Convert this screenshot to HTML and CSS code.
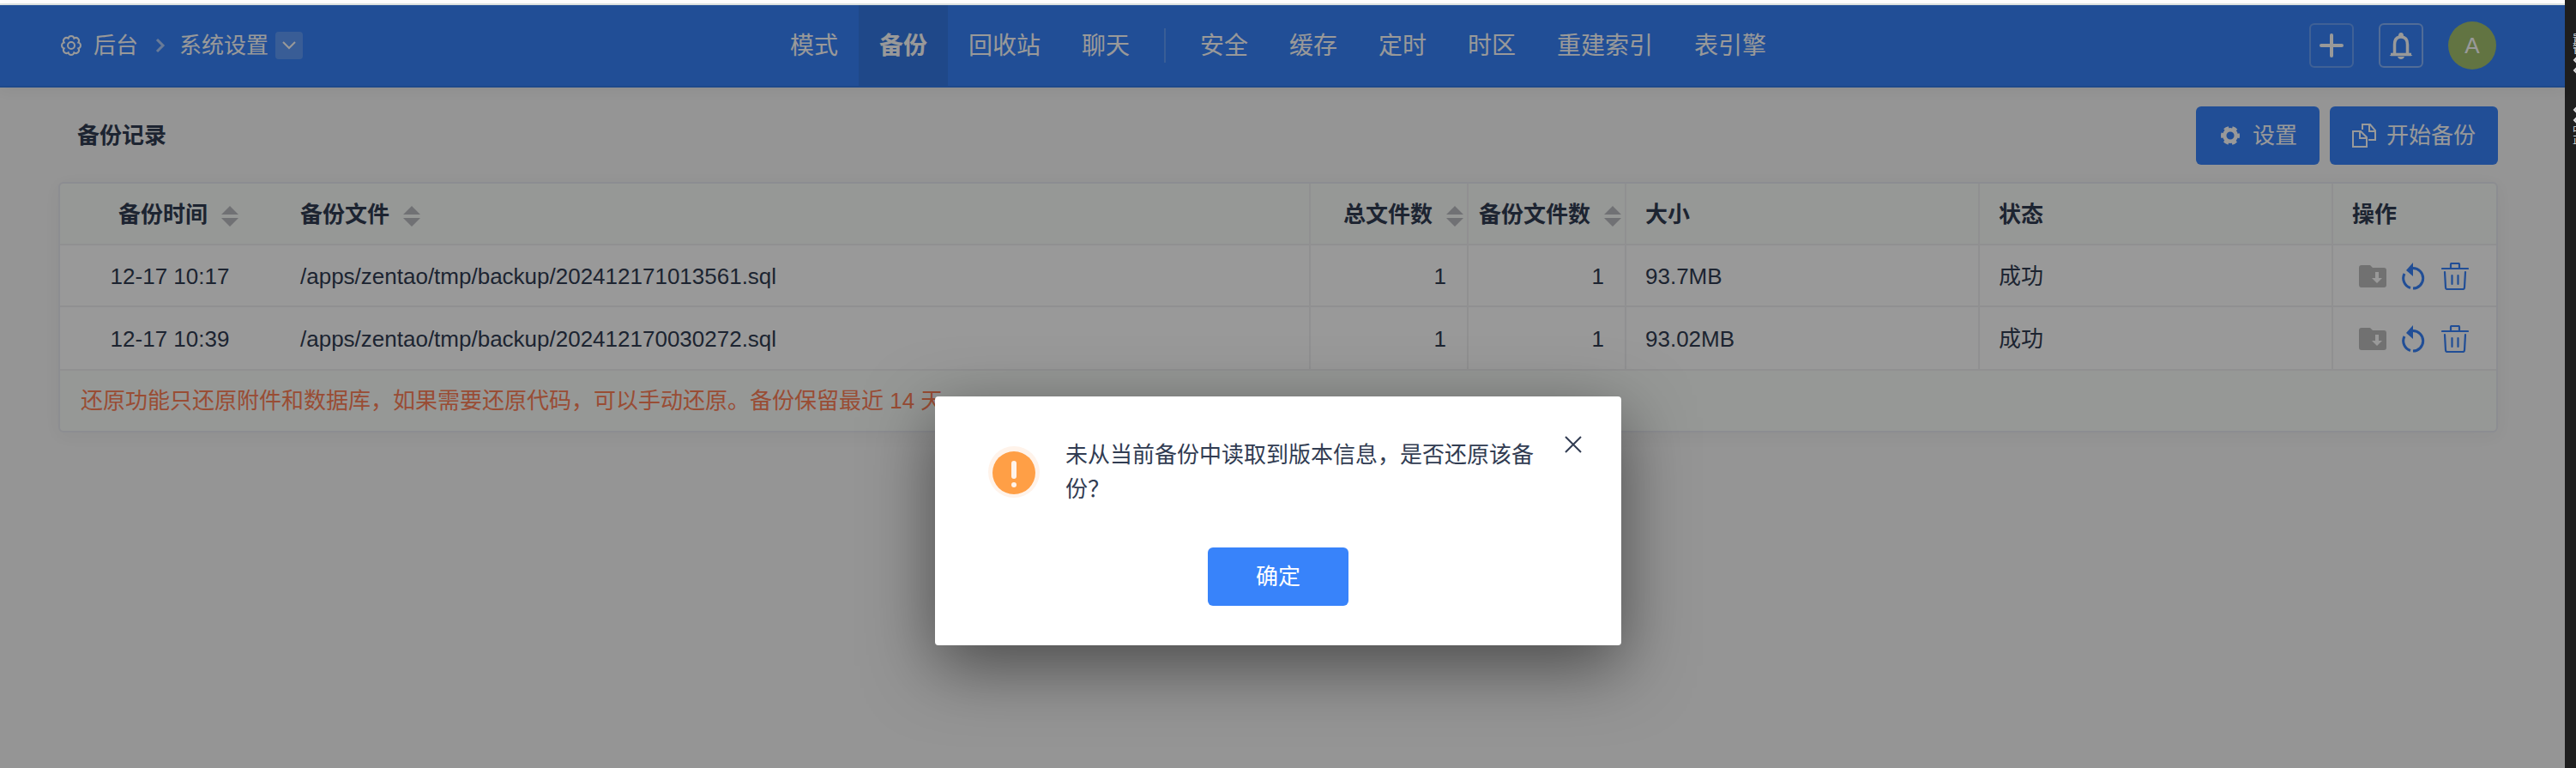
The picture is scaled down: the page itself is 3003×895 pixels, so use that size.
FILE: index.html
```html
<!DOCTYPE html>
<html lang="zh-CN">
  <head>
    <meta charset="UTF-8" />
    <meta name="viewport" content="width=device-width, initial-scale=1.0" />
    <title>备份</title>
    <link rel="stylesheet" href="styles.css">
  </head>
  <body>
    <!-- shared icons -->
    <svg class="sprite" aria-hidden="true">
      <symbol id="icon-sort" viewBox="0 0 20 24">
        <path d="M10 0 20 10H0zM0 14h20L10 24z" fill="currentColor" />
      </symbol>
      <symbol id="icon-folder" viewBox="0 0 32 32">
        <path fill="currentColor" fill-rule="evenodd" d="M3 3h10l3 3h13a3 3 0 0 1 3 3v17a3 3 0 0 1-3 3H3a3 3 0 0 1-3-3V6a3 3 0 0 1 3-3zM19 11v7h-4l6 6 6-6h-4v-7z" />
      </symbol>
      <symbol id="icon-restore" viewBox="0 0 32 32">
        <path fill="currentColor" d="M15 0v16L7 9z" />
        <path fill="none" stroke="currentColor" stroke-width="3" d="M15 6.600a11.700 11.700 0 1 1 0 23.400M12 29.500A11.700 11.700 0 0 1 5 13" />
      </symbol>
      <symbol id="icon-trash" viewBox="0 0 32 32">
        <path fill="none" stroke="currentColor" stroke-width="2.200" stroke-linecap="round" stroke-linejoin="round" d="M1 7h30M11 6V2q0-1 1-1h8q1 0 1 1v4M4 11l1 18q0 2 2 2h18q2 0 2-2l1-18M12.500 15v10M19.500 15v10" />
      </symbol>
      <symbol id="icon-mark" viewBox="0 0 12 12">
        <path fill="none" stroke="currentColor" stroke-width="2" d="M7 1 2 6l5 5 5-5z" />
      </symbol>
    </svg>

    <div class="window">
      <div class="topline"></div>
      <div class="page">
        <header class="header">
          <div class="breadcrumb">
            <a href="#" class="crumb">
              <svg class="icon-gear" viewBox="0 0 26 26" aria-hidden="true">
                <g fill="none" stroke="currentColor" stroke-width="2">
                  <path d="M9.600 4.700A3.500 3.500 0 0 1 16.400 4.700A3.500 3.500 0 0 1 21.300 9.600A3.500 3.500 0 0 1 21.300 16.400A3.500 3.500 0 0 1 16.400 21.300A3.500 3.500 0 0 1 9.600 21.300A3.500 3.500 0 0 1 4.700 16.400A3.500 3.500 0 0 1 4.700 9.600A3.500 3.500 0 0 1 9.600 4.700z" />
                  <circle cx="13" cy="13" r="4" />
                </g>
              </svg>
              后台
            </a>
            <svg class="icon-arrow" viewBox="0 0 12 18" aria-hidden="true">
              <path d="M2 2l7 7-7 7" fill="none" stroke="currentColor" stroke-width="3" />
            </svg>
            <a href="#" class="crumb">系统设置</a>
            <button type="button" class="crumb-toggle" aria-label="展开菜单">
              <svg viewBox="0 0 16 10" width="16" height="10">
                <path d="M1 1l7 7 7-7" fill="none" stroke="currentColor" stroke-width="2" />
              </svg>
            </button>
          </div>

          <nav class="nav">
            <a href="#">模式</a>
            <a href="#" class="active">备份</a>
            <a href="#">回收站</a>
            <a href="#">聊天</a>
            <span class="divider"></span>
            <a href="#">安全</a>
            <a href="#">缓存</a>
            <a href="#">定时</a>
            <a href="#">时区</a>
            <a href="#">重建索引</a>
            <a href="#">表引擎</a>
          </nav>

          <div class="toolbar">
            <button type="button" class="tool-btn faint" aria-label="新建">
              <svg viewBox="0 0 32 32" width="32" height="32">
                <path d="M16 4v24M4 16h24" stroke="currentColor" stroke-width="4" stroke-linecap="round" />
              </svg>
            </button>
            <button type="button" class="tool-btn" aria-label="通知">
              <svg viewBox="0 0 32 32" width="32" height="32">
                <path d="M4 26.500h24M8.500 26V15q0-9 7.500-9t7.500 9v11" fill="none" stroke="currentColor" stroke-width="3.500" />
                <path d="M13 5a3 4 0 0 1 6 0zM12 29h8q-1 3-4 3t-4-3z" fill="currentColor" />
                <path d="M9 23 2.500 28H9zM23 23l6.500 5H23z" fill="currentColor" />
              </svg>
            </button>
            <button type="button" class="avatar">A</button>
          </div>
        </header>

        <main class="main">
          <div class="main-header">
            <h1>备份记录</h1>
            <div class="actions">
              <button type="button" class="btn">
                <svg viewBox="0 0 28 28" width="28" height="28" aria-hidden="true">
                  <g fill="none" stroke="currentColor">
                    <circle cx="14" cy="14" r="6.800" stroke-width="4.500" />
                    <circle cx="14" cy="14" r="9" stroke-width="4" stroke-dasharray="5.400 4.025" stroke-dashoffset="2.700" />
                  </g>
                </svg>
                设置
              </button>
              <button type="button" class="btn">
                <svg viewBox="0 0 28 28" width="28" height="28" aria-hidden="true">
                  <g fill="none" stroke="currentColor" stroke-width="2">
                    <path d="M1 9h9l7 7v11H1zM9 9v8h8" />
                    <path d="M12 7V1h9l6 7v11h-8M20 1v8h7" />
                  </g>
                </svg>
                开始备份
              </button>
            </div>
          </div>

          <div class="panel">
            <table class="table">
              <colgroup>
                <col class="col-time" />
                <col />
                <col class="col-count" />
                <col class="col-count" />
                <col class="col-info" />
                <col class="col-info" />
                <col class="col-actions" />
              </colgroup>
              <thead>
                <tr>
                  <th class="time">备份时间<svg class="sort"><use href="#icon-sort" /></svg></th>
                  <th>备份文件<svg class="sort"><use href="#icon-sort" /></svg></th>
                  <th class="count line">总文件数<svg class="sort"><use href="#icon-sort" /></svg></th>
                  <th class="count line">备份文件数<svg class="sort"><use href="#icon-sort" /></svg></th>
                  <th class="line">大小</th>
                  <th class="line">状态</th>
                  <th class="line">操作</th>
                </tr>
              </thead>
              <tbody>
                <tr>
                  <td class="time">12-17 10:17</td>
                  <td>/apps/zentao/tmp/backup/202412171013561.sql</td>
                  <td class="count line">1</td>
                  <td class="count line">1</td>
                  <td class="line">93.7MB</td>
                  <td class="line">成功</td>
                  <td class="line">
                    <div class="row-actions">
                      <button type="button" disabled aria-label="备份"><svg><use href="#icon-folder" /></svg></button>
                      <button type="button" aria-label="还原"><svg><use href="#icon-restore" /></svg></button>
                      <button type="button" aria-label="删除"><svg><use href="#icon-trash" /></svg></button>
                    </div>
                  </td>
                </tr>
                <tr>
                  <td class="time">12-17 10:39</td>
                  <td>/apps/zentao/tmp/backup/202412170030272.sql</td>
                  <td class="count line">1</td>
                  <td class="count line">1</td>
                  <td class="line">93.02MB</td>
                  <td class="line">成功</td>
                  <td class="line">
                    <div class="row-actions">
                      <button type="button" disabled aria-label="备份"><svg><use href="#icon-folder" /></svg></button>
                      <button type="button" aria-label="还原"><svg><use href="#icon-restore" /></svg></button>
                      <button type="button" aria-label="删除"><svg><use href="#icon-trash" /></svg></button>
                    </div>
                  </td>
                </tr>
              </tbody>
            </table>
            <p class="panel-footer">还原功能只还原附件和数据库，如果需要还原代码，可以手动还原。备份保留最近 14 天</p>
          </div>
        </main>

        <div class="overlay">
          <div class="modal" role="dialog" aria-modal="true">
            <button type="button" class="close" aria-label="关闭">
              <svg viewBox="0 0 20 20" width="20" height="20">
                <path d="M1 1l18 18M19 1 1 19" stroke="currentColor" stroke-width="2" />
              </svg>
            </button>
            <div class="modal-body">
              <svg viewBox="0 0 60 60" width="60" height="60" aria-hidden="true">
                <circle cx="30" cy="30" r="30" fill="#fff3ea" />
                <circle cx="30" cy="31" r="25" fill="#ff9f46" />
                <path d="M30 20v15" stroke="#fff3ea" stroke-width="6" stroke-linecap="round" />
                <circle cx="30" cy="45" r="3" fill="#fff3ea" />
              </svg>
              <p>未从当前备份中读取到版本信息，是否还原该备份？</p>
            </div>
            <button type="button" class="btn confirm">确定</button>
          </div>
        </div>
      </div>
    </div>

    <aside class="side-strip" aria-hidden="true">
      <div>置<br />管<svg><use href="#icon-mark" /></svg><svg><use href="#icon-mark" /></svg></div>
      <div><svg><use href="#icon-mark" /></svg><svg><use href="#icon-mark" /></svg>中<br />正</div>
    </aside>
  </body>
</html>
```

FILE: styles.css
```css
* {
  box-sizing: border-box;
}
body {
  display: flex;
  min-height: 100vh;
  margin: 0;
  font-family: "Liberation Sans", "Noto Sans CJK SC", sans-serif;
  font-size: 26px;
  line-height: 40px;
  color: #313c52;
  background-color: #f8f8f8;
}
h1,
p {
  margin: 0;
}
a {
  color: inherit;
  text-decoration: none;
}
button {
  padding: 0;
  border: none;
  background: none;
  color: inherit;
  font: inherit;
  cursor: pointer;
}
svg {
  flex: none;
}
.sprite {
  position: absolute;
  width: 0;
  height: 0;
}
.window {
  flex: 1;
  display: flex;
  flex-direction: column;
  min-width: 0;
}
.topline {
  height: 6px;
  background-color: #fff;
  border-bottom: 2px solid #dfe5e3;
}
.page {
  position: relative;
  flex: 1;
}

/* header */
.header {
  display: grid;
  grid-template-columns: 1fr auto 1fr;
  height: 96px;
  padding: 0 80px 0 70px;
  color: #fff;
  background-color: #3883fa;
  border-bottom: 2px solid #327be8;
  box-shadow: 0 2px 16px rgba(0, 0, 0, 0.06);
}
.breadcrumb,
.crumb,
.toolbar,
.nav {
  display: flex;
  align-items: center;
}
.crumb {
  gap: 13px;
}
.icon-gear {
  width: 26px;
  height: 26px;
}
.icon-arrow {
  width: 12px;
  height: 18px;
  margin: 0 16px 0 20px;
  opacity: 0.6;
}
.crumb-toggle {
  display: flex;
  align-items: center;
  justify-content: center;
  width: 32px;
  height: 32px;
  margin-left: 8px;
  border-radius: 4px;
  background-color: rgba(255, 255, 255, 0.2);
}
.nav {
  font-size: 28px;
}
.nav a {
  display: flex;
  align-items: center;
  height: 100%;
  padding: 2px 24px 0;
}
.nav .active {
  font-weight: bold;
  background-color: #3479e4;
}
.divider {
  width: 2px;
  height: 40px;
  margin: 0 16px;
  background-color: rgba(255, 255, 255, 0.2);
}
.toolbar {
  justify-content: flex-end;
  gap: 29px;
}
.tool-btn {
  display: flex;
  align-items: center;
  justify-content: center;
  width: 52px;
  height: 52px;
  border: 2px solid rgba(255, 255, 255, 0.4);
  border-radius: 6px;
}
.tool-btn.faint {
  border-color: rgba(255, 255, 255, 0.25);
}
.avatar {
  width: 56px;
  height: 56px;
  border-radius: 50%;
  background-color: #a3c26f;
}

/* content */
.main {
  padding: 22px 78px 22px 68px;
}
.main-header {
  display: flex;
  align-items: center;
  justify-content: space-between;
  padding-left: 22px;
  margin-bottom: 20px;
}
h1 {
  font-size: 26px;
}
.actions {
  display: flex;
  gap: 12px;
}
.btn {
  display: flex;
  align-items: center;
  justify-content: center;
  gap: 12px;
  height: 68px;
  padding: 0 26px;
  border-radius: 6px;
  color: #fff;
  background-color: #3883fa;
}
.panel {
  border: 2px solid #e9ebf2;
  border-radius: 6px;
  background-color: #fbfdfb;
  box-shadow: 0 4px 20px rgba(0, 0, 0, 0.04);
}
.table {
  width: 100%;
  table-layout: fixed;
  border-collapse: separate;
  border-spacing: 0;
}
.col-time {
  width: 256px;
}
.col-count {
  width: 184px;
}
.col-info {
  width: 412px;
}
.col-actions {
  width: 192px;
}
th,
td {
  height: 72px;
  padding: 2px 24px 0;
  text-align: left;
  white-space: nowrap;
  border-bottom: 2px solid #f0f1f2;
}
td {
  background-color: #fff;
}
tbody tr:last-child td {
  height: 74px;
}
.line {
  padding-left: 22px;
  border-left: 2px solid #f0f1f2;
}
td.time {
  padding: 2px 0 0;
  text-align: center;
}
th.time {
  padding: 2px 0 0 68px;
}
.count {
  text-align: right;
}
th.count {
  padding: 2px 4px 0 0;
}
.sort {
  width: 20px;
  height: 24px;
  margin-left: 16px;
  vertical-align: middle;
  color: #bbbcc1;
}
.row-actions {
  display: flex;
  gap: 16px;
  padding-left: 8px;
  color: #3883fa;
}
.row-actions button,
.row-actions svg {
  display: block;
  width: 32px;
  height: 32px;
}
.row-actions button:disabled {
  color: #bcbcbc;
  cursor: default;
}
.panel-footer {
  padding: 15px 24px;
  color: #ff8058;
}

/* confirm dialog */
.overlay {
  position: absolute;
  inset: 0;
  padding: 456px 10px 0 0;
  background-color: rgba(0, 0, 0, 0.4);
}
.modal {
  position: relative;
  width: 800px;
  margin: 0 auto;
  padding: 48px 0 46px;
  border-radius: 4px;
  background-color: #fff;
  box-shadow: 0 24px 80px rgba(0, 0, 0, 0.5);
}
.modal-body {
  display: flex;
  align-items: center;
  gap: 30px;
  padding: 0 100px 0 62px;
}
.close {
  position: absolute;
  top: 36px;
  right: 36px;
  display: flex;
  padding: 10px;
}
.confirm {
  width: 164px;
  margin: 48px auto 0;
}

/* neighbouring dark window */
.side-strip {
  width: 13px;
  padding: 40px 0 0 9px;
  overflow: hidden;
  font-size: 12px;
  line-height: 12px;
  color: #ddd;
  background-color: #1f1f1f;
}
.side-strip div {
  width: 12px;
  margin-bottom: 34px;
}
.side-strip svg {
  display: block;
  width: 12px;
  height: 12px;
}
```
